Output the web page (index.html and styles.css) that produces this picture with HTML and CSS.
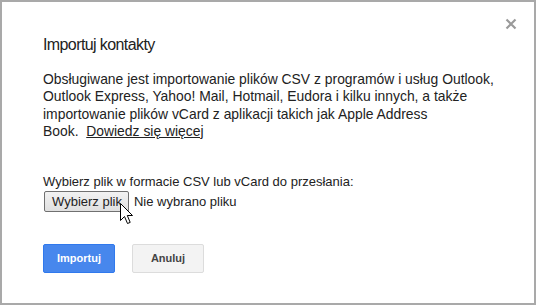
FILE: index.html
```html
<!DOCTYPE html>
<html lang="pl">
<head>
    <meta charset="UTF-8">
    <title>Importuj kontakty</title>
    <link rel="stylesheet" href="styles.css">
</head>
<body>
    <div class="dialog">
        <div class="close">
            <svg width="12" height="12" viewBox="0 0 12 12"><path d="M1.5 1.5 L10.5 10.5 M10.5 1.5 L1.5 10.5" stroke="#9a9a9a" stroke-width="2.2"/></svg>
        </div>
        <h1 class="title">Importuj kontakty</h1>
        <p class="info">Obsługiwane jest importowanie plików CSV z programów i usług Outlook,<br>
            Outlook Express, Yahoo! Mail, Hotmail, Eudora i kilku innych, a także<br>
            importowanie plików vCard z aplikacji takich jak Apple Address<br>
            Book.&nbsp; <a href="#" class="more">Dowiedz się więcej</a></p>
        <div class="upload">
            <div class="label">Wybierz plik w formacie CSV lub vCard do przesłania:</div>
            <div class="file-row">
                <span class="file-btn">Wybierz plik</span>
                <span class="file-name">Nie wybrano pliku</span>
                <svg class="cursor" width="14" height="23" viewBox="0 0 14 23"><path d="M0.5 0.5 L0.5 17.5 L4.5 13.5 L7.5 20.5 L10.2 19.4 L7.3 12.5 L12.5 12.5 Z" fill="#fff" stroke="#000" stroke-width="1"/></svg>
            </div>
        </div>
        <div class="actions">
            <span class="btn primary">Importuj</span>
            <span class="btn">Anuluj</span>
        </div>
    </div>
</body>
</html>
```

FILE: styles.css
```css
body{
    margin: 0;
    font-family: Arial, "Liberation Sans", sans-serif;
    background: #fff;
}
.dialog{
    position: relative;
    box-sizing: border-box;
    width: 536px;
    height: 305px;
    border: 2px solid #a9a9a9;
    padding: 31px 0 0 41px;
    color: #222;
}
.close{
    position: absolute;
    top: 16px;
    right: 17px;
    width: 12px;
    height: 12px;
}
.close svg{
    display: block;
}
.title{
    margin: 0;
    font-size: 16px;
    font-weight: normal;
    line-height: 24px;
    letter-spacing: -0.6px;
    color: #222;
}
.info{
    margin: 14px 0 0;
    font-size: 13.9px;
    line-height: 17.3px;
    white-space: nowrap;
}
.more{
    color: #222;
    text-decoration: underline;
}
.upload{
    margin-top: 33px;
    font-size: 13px;
}
.label{
    line-height: 17px;
}
.file-row{
    position: relative;
    display: flex;
    align-items: center;
    gap: 5px;
    margin-top: 1px;
}
.file-btn{
    box-sizing: border-box;
    height: 21px;
    padding: 0 6px 0 7px;
    margin-left: 1px;
    border: 1px solid #707070;
    border-radius: 2px;
    background: linear-gradient(#f2f2f2, #e0e0e0);
    line-height: 19px;
    font-size: 13px;
}
.cursor{
    position: absolute;
    left: 77px;
    top: 12px;
}
.actions{
    display: flex;
    gap: 17px;
    margin-top: 32px;
}
.btn{
    box-sizing: border-box;
    width: 72px;
    height: 29px;
    border: 1px solid #dcdcdc;
    border-radius: 2px;
    background: #f3f3f3;
    color: #444;
    font-size: 11px;
    font-weight: bold;
    line-height: 27px;
    text-align: center;
}
.btn.primary{
    background: #4787ed;
    border-color: #3079ed;
    color: #fff;
}
```
